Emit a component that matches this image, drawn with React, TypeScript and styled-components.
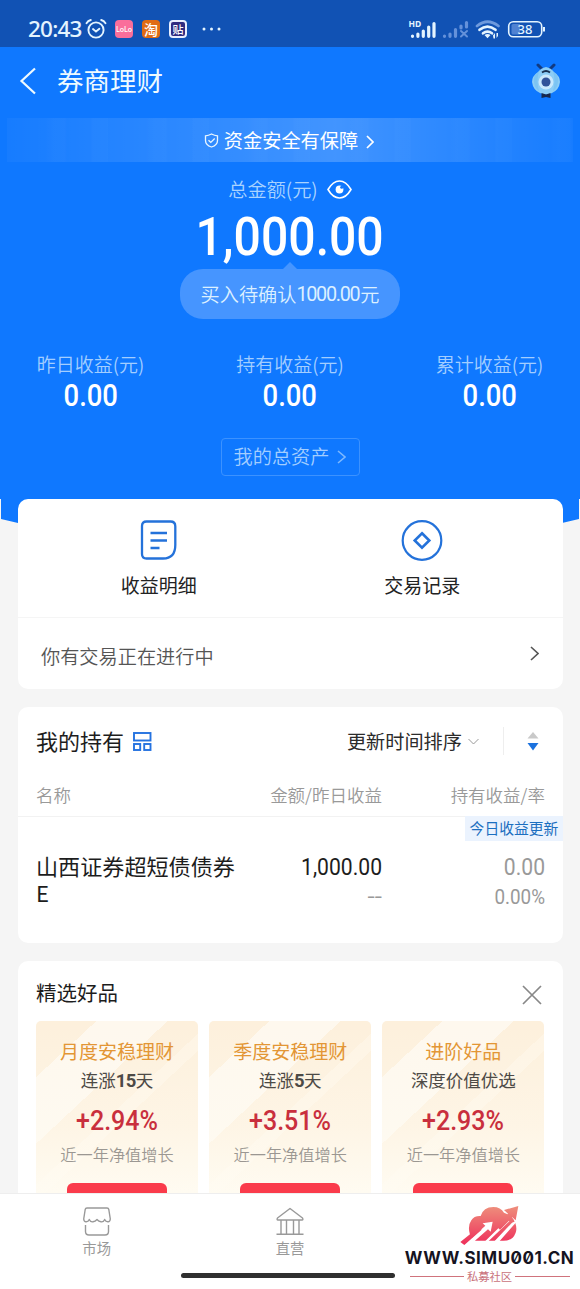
import React from 'react';
import styled, { createGlobalStyle } from 'styled-components';

const GlobalStyle = createGlobalStyle`
  * { box-sizing: border-box; }
  body { margin: 0; background: #f5f5f5; font-family: "Noto Sans CJK SC", sans-serif; }
  svg { display: block; flex: none; }
`;

const Page = styled.div`
  position: relative;
  width: 580px;
  height: 1289px;
  display: flex;
  flex-direction: column;
  overflow: hidden;
  background: #f5f5f5;
`;

const Scroll = styled.main`
  flex: 1;
  min-height: 0;
  overflow: hidden;
`;

const Hero = styled.section`
  height: 525px;
  background: #0f78ff;
  clip-path: polygon(0 0, 100% 0, 100% 499px, 579px 499px, 579px 519px, 562px 523px, 18px 523px, 1px 519px, 1px 499px, 0 499px);
  display: flex;
  flex-direction: column;
  align-items: center;
`;

const StatusBar = styled.div`
  width: 100%;
  height: 47px;
  padding: 11px 35px 0 28px;
  background: #1152b4;
  display: flex;
  align-items: center;
  color: #e4f4ff;
`;

const Clock = styled.span`
  font: 500 22.5px/34px "Noto Sans", sans-serif;
  letter-spacing: -0.8px;
  width: 57px;
  white-space: nowrap;
`;

const AppBadge = styled.span<{ $bg: string; $left: number; $size: number; $ring?: string }>`
  width: 18px;
  height: 18px;
  margin-left: ${p => p.$left}px;
  border-radius: 4px;
  background: ${p => p.$bg};
  border: ${p => (p.$ring ? `2px solid ${p.$ring}` : 'none')};
  color: #fff;
  font-size: ${p => p.$size}px;
  font-weight: 500;
  display: flex;
  align-items: center;
  justify-content: center;
  line-height: 1;
`;

const MoreDots = styled.svg`
  margin-left: 15px;
`;

const StatusIcons = styled.div`
  margin-left: auto;
  display: flex;
`;

const Header = styled.header`
  width: 100%;
  height: 71px;
  padding: 0 18px 3px 19px;
  display: flex;
  align-items: center;
`;

const Title = styled.h1`
  margin: -2px auto 0 20px;
  color: #eefaff;
  font-size: 26.5px;
  font-weight: 400;
  line-height: 36px;
`;

const Banner = styled.div`
  width: 566px;
  height: 44px;
  padding-right: 2px;
  display: flex;
  align-items: center;
  justify-content: center;
  color: #fff;
  font-size: 19.2px;
  background:
    repeating-linear-gradient(90deg, rgba(255,255,255,0) 0 38px, rgba(255,255,255,.014) 46px 58px, rgba(255,255,255,0) 60px 84px, rgba(255,255,255,.016) 85px 101px),
    linear-gradient(90deg, rgba(255,255,255,.03), rgba(255,255,255,.14) 36%, rgba(255,255,255,.21) 58%, rgba(255,255,255,.12) 78%, rgba(255,255,255,.03));
  line-height: 42px;
  & > span { margin: 0 8px 0 5px; }
  & > svg:last-child { margin-top: 3px; }
`;

const TotalLabel = styled.div`
  height: 50px;
  display: flex;
  align-items: center;
  gap: 9px;
  padding-top: 5px;
  color: #a9d3ff;
  font-size: 19.2px;
  font-weight: 350;
  & > span { margin-top: -1px; }
`;

const Figure = styled.span<{ $size: number; $line: number; $weight?: number; $scale?: number; $color?: string; $origin?: string }>`
  display: block;
  font-family: Roboto, sans-serif;
  font-size: ${p => p.$size}px;
  line-height: ${p => p.$line}px;
  font-weight: ${p => p.$weight ?? 500};
  color: ${p => p.$color ?? '#fff'};
  transform: scaleX(${p => p.$scale ?? 1});
  transform-origin: ${p => p.$origin ?? 'center'};
  white-space: nowrap;
`;

const Bubble = styled.div`
  position: relative;
  width: 220px;
  height: 50px;
  margin-top: 9px;
  border-radius: 23px;
  background: #4695ff;
  color: #dcf0ff;
  font-size: 19.2px;
  font-weight: 350;
  line-height: 51px;
  display: flex;
  justify-content: center;
  &::before {
    content: '';
    position: absolute;
    left: 103px;
    top: -7px;
    border: 7px solid transparent;
    border-top: 0;
    border-bottom-color: #4695ff;
  }
`;

const BubbleDigits = styled.span`
  font-family: Roboto, sans-serif;
  font-size: 19.8px;
  font-weight: 400;
  letter-spacing: -1.3px;
  line-height: 52px;
  margin-right: 1px;
`;

const Stats = styled.div`
  width: 100%;
  margin-top: 30px;
  display: flex;
  justify-content: center;
`;

const Stat = styled.div`
  width: 199.5px;
  flex: none;
  text-align: center;
  color: #a3ceff;
  font-size: 19px;
  font-weight: 350;
  line-height: 29px;
`;

const AssetsButton = styled.button`
  width: 139px;
  height: 38px;
  margin-top: 25px;
  padding: 0 0 2px;
  border: 1px solid #3c92ff;
  border-radius: 4px;
  background: none;
  color: #a3ceff;
  font: 350 19.2px/34px "Noto Sans CJK SC", sans-serif;
  display: flex;
  align-items: center;
  justify-content: center;
  gap: 8px;
  & > svg { margin-top: 2px; }
`;

const Card = styled.section<{ $height: number; $top: number }>`
  position: relative;
  width: 545px;
  height: ${p => p.$height}px;
  margin: ${p => p.$top}px 0 0 18px;
  border-radius: 10px;
  background: #fff;
`;

const Shortcuts = styled.div`
  height: 119px;
  padding: 0 9px;
  display: flex;
  border-bottom: 1px solid #f5f5f5;
`;

const Shortcut = styled.div`
  width: 50%;
  padding-top: 20px;
  display: flex;
  flex-direction: column;
  align-items: center;
  color: #222;
  font-size: 19px;
  line-height: 28px;
  & > span { margin-top: 10px; }
`;

const Notice = styled.div`
  height: 70px;
  padding: 0 24px 0 23px;
  display: flex;
  align-items: center;
  justify-content: space-between;
  color: #555;
  font-size: 19.2px;
  font-weight: 350;
  & > span { margin-top: 5px; }
`;

const HoldingsHead = styled.div`
  height: 68px;
  padding: 0 24px 0 18px;
  display: flex;
  align-items: center;
`;

const CardTitle = styled.h2<{ $size: number }>`
  margin: -2px 9px 0 0;
  font-size: ${p => p.$size}px;
  font-weight: 400;
  color: #1d1d1d;
  line-height: 32px;
`;

const SortLabel = styled.span`
  margin: -1px 6px 0 auto;
  color: #2b2b2b;
  font-size: 19.2px;
`;

const Rule = styled.i`
  width: 1px;
  height: 28px;
  margin: 0 23px 0 24px;
  background: #eee;
`;

const Columns = styled.div<{ $height: number; $line?: boolean; $top?: number }>`
  height: ${p => p.$height}px;
  margin-top: ${p => p.$top ?? 0}px;
  padding: 0 18px;
  display: grid;
  grid-template-columns: 206px 140px 1fr;
  color: #999;
  font-size: 17.5px;
  font-weight: 350;
  line-height: 40px;
  border-bottom: ${p => (p.$line ? '1px solid #f2f2f2' : 'none')};
`;

const Cell = styled.div<{ $right?: boolean }>`
  text-align: ${p => (p.$right ? 'right' : 'left')};
  white-space: nowrap;
`;

const FundName = styled.div`
  width: 202px;
  color: #1d1d1d;
  font-size: 22.1px;
  font-weight: 400;
  line-height: 27px;
  margin-top: -1px;
`;

const UpdateTag = styled.span`
  position: absolute;
  right: 0;
  top: 109px;
  width: 98px;
  height: 25px;
  background: #ebf3fe;
  color: #1c6fc0;
  font-size: 14.8px;
  line-height: 24px;
  text-align: center;
`;

const PicksHead = styled.div`
  height: 60px;
  padding: 4px 21px 0 18px;
  display: flex;
  align-items: center;
  justify-content: space-between;
  & > svg { margin-top: 4px; }
`;

const Tiles = styled.div`
  padding: 0 18px;
  display: grid;
  grid-template-columns: repeat(3, 162px);
  column-gap: 11.2px;
`;

const Tile = styled.article`
  height: 190px;
  padding-top: 15px;
  border-radius: 5px 5px 0 0;
  display: flex;
  flex-direction: column;
  align-items: center;
  background:
    linear-gradient(180deg, rgba(255,252,243,0) 0%, rgba(255,252,243,.4) 55%, #fffcf3 95%),
    linear-gradient(137deg, #fdf0dc 0 16.5%, #fef8ee 16.5% 36%, #fdf0dc 36% 48%, #fef4e4 48% 53%, #fdf0dc 53% 100%);
`;

const TileName = styled.div`
  color: #e39635;
  font-size: 19px;
  line-height: 30px;
`;

const TileNote = styled.div`
  color: #4d4a46;
  font-size: 17.5px;
  line-height: 27px;
  & > b { font: 700 18.5px/20px Roboto, sans-serif; letter-spacing: -0.6px; }
`;

const TileDesc = styled.div`
  color: #9b9792;
  font-size: 16.2px;
  font-weight: 350;
  line-height: 24px;
  margin-top: -7px;
`;

const TileButton = styled.div`
  width: 100px;
  height: 28px;
  margin-top: 17px;
  border-radius: 6px;
  background: #fa3b4b;
`;

const TabBar = styled.nav`
  position: relative;
  height: 96px;
  flex: none;
  display: flex;
  background: #fff;
  border-top: 1px solid #eee;
`;

const Tab = styled.div`
  width: 193.3px;
  padding-top: 13px;
  display: flex;
  flex-direction: column;
  align-items: center;
  color: #999;
  font-size: 14.3px;
  line-height: 20px;
  & > span { margin-top: 2px; }
`;

const HomeIndicator = styled.i`
  position: absolute;
  left: 181px;
  bottom: 11px;
  width: 214px;
  height: 5px;
  border-radius: 3px;
  background: #2f2f2f;
`;

const SiteMark = styled.div`
  position: absolute;
  right: 5px;
  bottom: 6px;
  width: 171px;
  display: flex;
  flex-direction: column;
  align-items: center;
`;

const SiteUrl = styled.div`
  margin-top: 2px;
  font: 700 17px/22px Inter, sans-serif;
  font-feature-settings: "zero";
  letter-spacing: 0.5px;
  color: #15131f;
  white-space: nowrap;
`;

const SiteName = styled.div`
  width: 160px;
  display: flex;
  align-items: center;
  gap: 3px;
  color: #c9727b;
  font-size: 11.3px;
  line-height: 14px;
  &::before, &::after { content: ''; flex: 1; height: 1px; background: #d0737c; }
`;

const Chevron = ({ w, h, color, stroke = 1.6 }: { w: number; h: number; color: string; stroke?: number }) => (
  <svg width={w} height={h} viewBox={`0 0 ${w} ${h}`} fill="none" stroke={color} strokeWidth={stroke}>
    <path d={`M1 1L${w - 1} ${h / 2}L1 ${h - 1}`} />
  </svg>
);

const AlarmIcon = () => (
  <svg width="22" height="22" viewBox="0 0 22 22" fill="none" stroke="#e4f4ff" strokeWidth="1.9" strokeLinecap="round">
    <circle cx="11" cy="12" r="7.6" />
    <path d="M1.5 5.2Q3 2.8 5.8 2M20.5 5.2Q19 2.8 16.2 2M8 11l3 2.6 3.4-2.8" />
  </svg>
);

const SignalIcons = () => (
  <svg width="137" height="24" viewBox="408 17 137 24">
    <text x="408.500" y="26.500" fontFamily="Noto Sans" fontSize="8.500" fontWeight="700" fill="#e4f4ff">HD</text>
    <g stroke="#e4f4ff" strokeWidth="3.200" strokeLinecap="round">
      <path d="M412.500 36v.3M417.900 34v2.300M423.300 31v5.300M428.700 27v9.300M434 23.500v12.800" />
    </g>
    <g stroke="#6491da" strokeWidth="3.200" strokeLinecap="round">
      <path d="M444.500 36v.3M450 34v2.300M455.500 29.500v6.800M461 26v2M466.500 22.500v4.500" />
      <path d="M461 31l6 5.500M467 31l-6 5.500" strokeWidth="2" />
    </g>
    <g fill="none" strokeWidth="2.700" strokeLinecap="round">
      <path d="M477 26q10.500-8.500 21.500 0" stroke="#6e9add" />
      <path d="M479.500 29.800q8-6.500 16 0M483 33.300q4.500-3.500 9 0" stroke="#e4f4ff" />
    </g>
    <path d="M484.500 35q3-2 6 0l-3 3.200zM493 35.500l2-2.500v5.500h-1.500zM496.500 33h1.500v3l-1.500 2z" fill="#e4f4ff" />
    <rect x="508.700" y="21.700" width="33" height="15" rx="4.500" fill="none" stroke="#e4f4ff" strokeWidth="1.600" />
    <path d="M513 24h7v10.500h-7q-1.500 0-1.500-1.500v-7.500q0-1.500 1.500-1.500z" fill="#4f82d2" />
    <text x="525" y="33.800" textAnchor="middle" fontFamily="Noto Sans" fontSize="13" fontWeight="500" fill="#e4f4ff">38</text>
    <path d="M544 27v4.500" stroke="#e4f4ff" strokeWidth="2" />
  </svg>
);

const MascotIcon = () => (
  <svg width="32" height="36" viewBox="0 0 32 36">
    <path d="M8 2l4 4M24 2l-4 4" stroke="#123a80" strokeWidth="3" strokeLinecap="round" />
    <path d="M16 4q5 1 8 5 6 4 6 10-1 8-8 11-6 3-12 0-7-3-8-11 0-6 6-10 3-4 8-5z" fill="#8ccdf6" />
    <path d="M4 15q1-4 5-6-3 8 0 19-6-4-5-13zM28 15q-1-4-5-6 3 8 0 19 6-4 5-13z" fill="#7cc4f3" />
    <circle cx="16" cy="19" r="7.500" fill="#cbe9fd" />
    <circle cx="16" cy="19" r="4.500" fill="#31539a" />
    <path d="M12 9.500q4-3 8 0" fill="none" stroke="#173051" strokeWidth="1.800" />
    <path d="M11.500 30l4.500 1.500 4.500-1.500v5l-4.500-1-4.500 1z" fill="#17284c" />
  </svg>
);

const ShieldIcon = () => (
  <svg width="15" height="15" viewBox="0 0 14 15" fill="none" stroke="#eaf6ff" strokeWidth="1.300">
    <path d="M7 1q3 1.700 6 1.800v4.600q0 4.600-6 6.600-6-2-6-6.600V2.800Q4 2.700 7 1z" />
    <path d="M4 7.200l2.300 2.200L10.200 5.500" />
  </svg>
);

const EyeIcon = () => (
  <svg width="25" height="19" viewBox="0 0 25 19" fill="none">
    <path d="M1 9.500Q6 1 12.500 1T24 9.500Q19 18 12.500 18T1 9.500z" stroke="#fff" strokeWidth="1.600" />
    <circle cx="12.500" cy="9.500" r="3.900" fill="#fff" />
    <circle cx="14.700" cy="7.300" r="1.500" fill="#0f78ff" />
  </svg>
);

const DetailIcon = () => (
  <svg width="42" height="42" viewBox="0 0 42 42" fill="none" stroke="#2472da" strokeWidth="2.300">
    <path d="M8.500 2.500H32.500Q37.300 2.500 37.300 7.300V26Q37.300 39.500 25 39.500H8.500Q4 39.500 4 35V7Q4 2.500 8.500 2.500z" />
    <path d="M12.500 14H29M12.500 21.500H29M12.500 29H21.500" strokeWidth="2.300" />
  </svg>
);

const RecordIcon = () => (
  <svg width="42" height="42" viewBox="0 0 42 42" fill="none" stroke="#2472da" strokeWidth="2.200">
    <circle cx="21" cy="21.500" r="19.300" />
    <path d="M21 14.300l7.300 7.200-7.300 7.200-7.300-7.200z" strokeWidth="2.600" />
  </svg>
);

const LayoutIcon = () => (
  <svg width="19" height="19" viewBox="0 0 19 19" fill="none" stroke="#2472e0" strokeWidth="1.900">
    <rect x="1" y="1" width="16.500" height="7.500" />
    <rect x="1" y="12" width="6.200" height="6" />
    <rect x="11.200" y="12" width="6.300" height="6" />
  </svg>
);

const MarketIcon = () => (
  <svg width="28" height="29" viewBox="0 0 28 29" fill="none" stroke="#999" strokeWidth="1.400" strokeLinejoin="round">
    <path d="M4 1H24Q25.500 1 25.800 2.500L27.300 12Q27 15 24.800 14.800 22.700 14.700 21.700 12.500 20.500 15.300 18 14.800 15.800 14.500 14 12.500 12.200 14.500 10 14.800 7.500 15.300 6.300 12.500 5.300 14.700 3.200 14.800 1 15 .7 12L2.200 2.500Q2.500 1 4 1z" />
    <path d="M2.500 18V24.500Q2.500 28 6 28H22Q25.500 28 25.500 24.500V18" />
  </svg>
);

const BankIcon = () => (
  <svg width="28" height="29" viewBox="0 0 28 29" fill="none" stroke="#999" strokeWidth="1.400" strokeLinejoin="round">
    <path d="M14 1.500L26.500 11Q27.500 13 26 13H2Q.5 13 1.500 11zM5 13V27M10.500 13V27M17.500 13V27M23 13V27M.5 27.300H27.500" />
  </svg>
);

const CloudArrow = () => (
  <svg width="59" height="39" viewBox="28 22 177 117">
    <defs>
      <linearGradient id="cloud" gradientUnits="userSpaceOnUse" x1="0" y1="22" x2="0" y2="138">
        <stop offset="0" stopColor="#ee8f7c" />
        <stop offset="1" stopColor="#ee2f5b" />
      </linearGradient>
    </defs>
    <path d="M58 108Q50 82 62 65 70 51 90 52 98 25 128 25 150 25 160 42L178 50Q188 58 194 74 203 98 186 117 176 126 158 126H75Q62 122 58 108z" fill="url(#cloud)" />
    <path d="M96 74L126 69 120 99 112 92 72 127 50 130 104 81zM104 127L172 60 176 68 114 127zM132 127L184 72 198 66 192 76 147 127z" fill="#fff" />
    <path d="M29 130L84 86 93 93 41 139zM160 34L203 22 195 65 185 56 148 93 140 86 172 45z" fill="url(#cloud)" />
  </svg>
);

const stats = [
  { label: '昨日收益(元)', value: '0.00' },
  { label: '持有收益(元)', value: '0.00' },
  { label: '累计收益(元)', value: '0.00' },
];

const picks = [
  { name: '月度安稳理财', note: <>连涨<b>15</b>天</>, rate: '+2.94%' },
  { name: '季度安稳理财', note: <>连涨<b>5</b>天</>, rate: '+3.51%' },
  { name: '进阶好品', note: <>深度价值优选</>, rate: '+2.93%' },
];

export default function App() {
  return (
    <Page>
      <GlobalStyle />
      <Scroll>
        <Hero>
          <StatusBar>
            <Clock>20:43</Clock>
            <AlarmIcon />
            <AppBadge $bg="#fa6e9b" $left={8} $size={7}>LoLo</AppBadge>
            <AppBadge $bg="#e06b13" $left={9} $size={14}>淘</AppBadge>
            <AppBadge $bg="#302b80" $left={9} $size={11} $ring="#e9efff">贴</AppBadge>
            <MoreDots width="20" height="4" viewBox="0 0 20 4" fill="#e4f4ff">
              <circle cx="2" cy="2" r="1.500" /><circle cx="9.500" cy="2" r="1.500" /><circle cx="17" cy="2" r="1.500" />
            </MoreDots>
            <StatusIcons><SignalIcons /></StatusIcons>
          </StatusBar>
          <Header>
            <svg width="18" height="28" viewBox="0 0 18 28" fill="none" stroke="#eefaff" strokeWidth="2.200"><path d="M16 1.500L2.500 14 16 26.500" /></svg>
            <Title>券商理财</Title>
            <MascotIcon />
          </Header>
          <Banner>
            <ShieldIcon />
            <span>资金安全有保障</span>
            <Chevron w={8} h={14} color="#fff" stroke={1.7} />
          </Banner>
          <TotalLabel><span>总金额(元)</span><EyeIcon /></TotalLabel>
          <Figure $size={54.5} $line={48} $scale={0.883}>1,000.00</Figure>
          <Bubble>买入待确认<BubbleDigits>1000.00</BubbleDigits>元</Bubble>
          <Stats>
            {stats.map(s => (
              <Stat key={s.label}>
                {s.label}
                <Figure $size={30.5} $line={35} $scale={0.9}>{s.value}</Figure>
              </Stat>
            ))}
          </Stats>
          <AssetsButton>我的总资产<Chevron w={9} h={14} color="#7db8ff" /></AssetsButton>
        </Hero>

        <Card $height={190} $top={-26}>
          <Shortcuts>
            <Shortcut><DetailIcon /><span>收益明细</span></Shortcut>
            <Shortcut><RecordIcon /><span>交易记录</span></Shortcut>
          </Shortcuts>
          <Notice><span>你有交易正在进行中</span><Chevron w={9} h={15} color="#555" /></Notice>
        </Card>

        <Card $height={236} $top={18}>
          <HoldingsHead>
            <CardTitle $size={22}>我的持有</CardTitle>
            <LayoutIcon />
            <SortLabel>更新时间排序</SortLabel>
            <svg width="11" height="7" viewBox="0 0 11 7" fill="none" stroke="#999"><path d="M.5 1l5 5 5-5" /></svg>
            <Rule />
            <svg width="12" height="20" viewBox="0 0 12 20"><path d="M6 1l5.500 6.500H.5z" fill="#c9c9c9" /><path d="M6 19.500L.5 12h11z" fill="#1c72de" /></svg>
          </HoldingsHead>
          <Columns $height={42} $line>
            <Cell>名称</Cell>
            <Cell $right>金额/昨日收益</Cell>
            <Cell $right>持有收益/率</Cell>
          </Columns>
          <UpdateTag>今日收益更新</UpdateTag>
          <Columns $height={80} $top={36}>
            <FundName>山西证券超短债债券E</FundName>
            <Cell $right>
              <Figure $size={24} $line={28} $weight={400} $scale={0.88} $color="#1d1d1d" $origin="right">1,000.00</Figure>
              <Figure $size={20} $line={31} $weight={400} $scale={1.3} $color="#999" $origin="right">--</Figure>
            </Cell>
            <Cell $right>
              <Figure $size={24} $line={28} $weight={400} $scale={0.88} $color="#999" $origin="right">0.00</Figure>
              <Figure $size={20.5} $line={32} $weight={400} $scale={0.92} $color="#999" $origin="right">0.00%</Figure>
            </Cell>
          </Columns>
        </Card>

        <Card $height={300} $top={18}>
          <PicksHead>
            <CardTitle $size={20.5}>精选好品</CardTitle>
            <svg width="20" height="20" viewBox="0 0 20 20" stroke="#888" strokeWidth="1.700"><path d="M1 1l18 18M19 1L1 19" /></svg>
          </PicksHead>
          <Tiles>
            {picks.map(p => (
              <Tile key={p.name}>
                <TileName>{p.name}</TileName>
                <TileNote>{p.note}</TileNote>
                <Figure $size={27.5} $line={56} $scale={0.91} $color="#c92f3d">{p.rate}</Figure>
                <TileDesc>近一年净值增长</TileDesc>
                <TileButton />
              </Tile>
            ))}
          </Tiles>
        </Card>
      </Scroll>

      <TabBar>
        <Tab><MarketIcon /><span>市场</span></Tab>
        <Tab><BankIcon /><span>直营</span></Tab>
        <HomeIndicator />
      </TabBar>
      <SiteMark>
        <CloudArrow />
        <SiteUrl>WWW.SIMU001.CN</SiteUrl>
        <SiteName>私募社区</SiteName>
      </SiteMark>
    </Page>
  );
}
